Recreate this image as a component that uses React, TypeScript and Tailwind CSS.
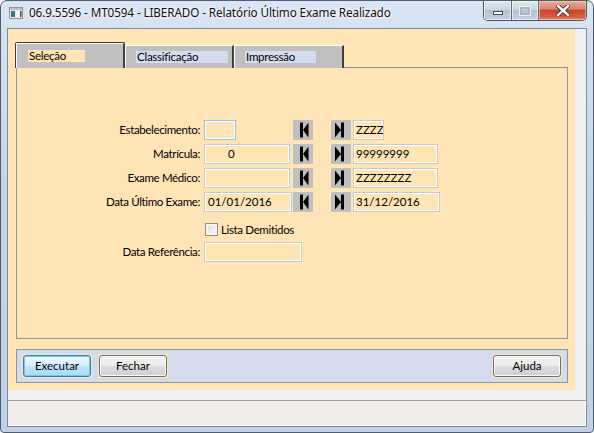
import type { ReactNode } from "react";

const PEACH = "bg-[#ffe4b5]";

function NavFirst() {
  return (
    <div className="w-[20px] h-[20px] bg-[#c0c0c0] shrink-0">
      <svg width="20" height="20" viewBox="0 0 20 20">
        <rect x="7" y="2.5" width="3" height="15" fill="#000" />
        <polygon points="10,10 15.5,2.5 15.5,17.5" fill="#000" />
      </svg>
    </div>
  );
}

function NavLast() {
  return (
    <div className="w-[20px] h-[20px] bg-[#c0c0c0] shrink-0">
      <svg width="20" height="20" viewBox="0 0 20 20">
        <polygon points="4,2.5 10,10 4,17.5" fill="#000" />
        <rect x="10" y="2.5" width="3" height="15" fill="#000" />
      </svg>
    </div>
  );
}

function Field({
  w,
  value,
  pad = "pl-[3px]",
  focus,
}: {
  w: string;
  value?: string;
  pad?: string;
  focus?: boolean;
}) {
  return (
    <div
      className={`${w} h-[20px] ${PEACH} border ${
        focus ? "border-[#9cc1e6]" : "border-[#c9c9c9]"
      } shadow-[inset_0_0_0_1px_#fff] ${pad} flex items-center overflow-hidden whitespace-nowrap text-black`}
    >
      {value}
    </div>
  );
}

function Row({
  label,
  left,
  right,
}: {
  label: string;
  left: ReactNode;
  right: ReactNode;
}) {
  return (
    <div className="flex items-center h-[20px]">
      <div className="w-[183px] text-right tracking-[-0.35px]">{label}</div>
      <div className="w-[89px] ml-[4px]">{left}</div>
      <NavFirst />
      <div className="w-[18px]" />
      <NavLast />
      <div className="ml-[2px]">{right}</div>
    </div>
  );
}

function WinButton({ children, primary }: { children: ReactNode; primary?: boolean }) {
  return (
    <div className={`${PEACH} p-[1px]`}>
      <div
        className={`w-[68px] h-[22px] rounded-[3px] border flex items-center justify-center ${
          primary
            ? "border-[#3c7fb1] bg-[linear-gradient(#eaf6fd_0%,#d9f0fc_50%,#bee6fd_50%,#a7d9f5_100%)] shadow-[inset_0_0_0_1px_#60d0f4]"
            : "border-[#707070] bg-[linear-gradient(#f2f2f2_0%,#ebebeb_50%,#dddddd_50%,#cfcfcf_100%)] shadow-[inset_0_0_0_1px_#fcfcfc]"
        }`}
      >
        {children}
      </div>
    </div>
  );
}

export default function App() {
  return (
    <div className="w-[594px] h-[433px] flex flex-col border border-[#4f5f70] rounded-t-[7px] rounded-b-[4px] overflow-hidden bg-[linear-gradient(180deg,#d9e5f2_0%,#c4d6e9_40%,#bed1e6_100%)] font-['Lato',sans-serif] text-[11.5px] text-black">
      {/* title bar */}
      <div className="h-[27px] flex shrink-0">
        <div className="flex items-center h-[24px] pl-[8px]">
          <svg width="14" height="12" viewBox="0 0 14 12">
            <rect x="0.5" y="0.5" width="13" height="11" fill="#e6eaea" stroke="#8a9696" />
            <rect x="1" y="1" width="12" height="2" fill="#b8c4c8" />
            <rect x="2" y="4" width="4" height="6" fill="#2e7f78" />
            <rect x="7" y="4" width="4" height="6" fill="#f4f6f6" />
            <rect x="11" y="4" width="1.5" height="6" fill="#3a4a50" />
          </svg>
          <span className="ml-[6px] font-['Noto_Sans',sans-serif] text-[11.7px] tracking-[-0.1px] text-[#111] [text-shadow:0_0_6px_#fff,0_0_3px_#fff]">
            06.9.5596 - MT0594 - LIBERADO - Relatório Último Exame Realizado
          </span>
        </div>
        <div className="flex-1" />
        <div className="flex h-[20px] mr-[6px] rounded-b-[5px] border border-t-0 border-[#4b5b6c] overflow-hidden">
          <div className="w-[28px] h-full border-r border-[#5c6c7c] bg-[linear-gradient(#dfe5ec_0%,#cdd6e0_45%,#b4c1cf_50%,#c5d1de_100%)] shadow-[inset_0_0_0_1px_rgba(255,255,255,0.6)] flex items-center justify-center">
            <div className="w-[10px] h-[4px] mt-[5px] bg-white border border-[#3d4b5c]" />
          </div>
          <div className="w-[27px] h-full border-r border-[#5c6c7c] bg-[linear-gradient(#dfe5ec_0%,#cdd6e0_45%,#b4c1cf_50%,#c5d1de_100%)] shadow-[inset_0_0_0_1px_rgba(255,255,255,0.6)] flex items-center justify-center">
            <div className="w-[10px] h-[8px] border-[2px] border-[#a8b6c6] bg-transparent shadow-[0_0_0_1px_#e8eef5]" />
          </div>
          <div className="w-[47px] h-full bg-[linear-gradient(#e9a897_0%,#d88a74_40%,#c7462b_50%,#d35a3e_80%,#e08a6c_100%)] shadow-[inset_0_0_0_1px_rgba(255,220,210,0.5)] flex items-center justify-center">
            <svg width="14" height="11" viewBox="0 0 14 11">
              <path
                d="M2 1 L12 10 M12 1 L2 10"
                stroke="#3b2a28"
                strokeWidth="4.2"
                strokeLinecap="square"
              />
              <path
                d="M2 1 L12 10 M12 1 L2 10"
                stroke="#fff"
                strokeWidth="2.4"
                strokeLinecap="square"
              />
            </svg>
          </div>
        </div>
      </div>

      {/* client */}
      <div className="mx-[6px] h-[399px] shrink-0 border border-[#7d8c9c] bg-[#f0f0f0] flex flex-col">
        <div className="flex h-[361px] shrink-0">
          <div className={`w-[567px] ${PEACH} pl-[8px] pt-[13px] flex flex-col`}>
            {/* tabs */}
            <div className="flex items-end h-[26px] -mb-[1px] relative z-10 tracking-[-0.25px]">
              <div className="w-[110px] h-[26px] bg-[#c0c0c0] border border-b-0 border-[#3c3c3c] rounded-t-[2px] -ml-[1px]">
                <div className="h-full border-t border-l border-white flex items-center pl-[11px] border-r border-r-[#404040]">
                  <span className="bg-[#ffe4b5] w-[57px] h-[12px] leading-[12px] pl-[1px]">Seleção</span>
                </div>
              </div>
              <div className="w-[109px] h-[23px] bg-[#c0c0c0] border-t border-l border-white border-r-2 border-r-[#404040] flex items-center pl-[10px]">
                <span className="bg-[#d4dcf0] w-[92px] h-[12px] leading-[12px] pl-[1px]">Classificação</span>
              </div>
              <div className="w-[110px] h-[23px] bg-[#c0c0c0] border-t border-l border-white border-r-2 border-r-[#404040] flex items-center pl-[10px]">
                <span className="bg-[#d4dcf0] w-[71px] h-[12px] leading-[12px] pl-[1px]">Impressão</span>
              </div>
            </div>

            {/* tab panel */}
            <div className="w-[552px] h-[272px] border border-[#8e969e] pt-[52px] flex flex-col">
              <div className="flex flex-col gap-[4px]">
                <Row
                  label="Estabelecimento:"
                  left={<Field w="w-[32px]" focus />}
                  right={<Field w="w-[31px]" value="ZZZZZ" pad="pl-[2px]" />}
                />
                <Row
                  label="Matrícula:"
                  left={<Field w="w-[86px]" value="0" pad="pl-[23px]" />}
                  right={<Field w="w-[85px]" value="99999999" pad="pl-[2px]" />}
                />
                <Row
                  label="Exame Médico:"
                  left={<Field w="w-[86px]" />}
                  right={<Field w="w-[85px]" value="ZZZZZZZZ" pad="pl-[2px]" />}
                />
                <Row
                  label="Data Último Exame:"
                  left={<Field w="w-[88px]" value="01/01/2016" />}
                  right={<Field w="w-[87px]" value="31/12/2016" pad="pl-[2px]" />}
                />
              </div>

              <div className="flex items-center h-[13px] mt-[11px] pl-[188px]">
                <div className="w-[13px] h-[13px] border border-[#8e8f8f] bg-[linear-gradient(135deg,#dcdcdc,#fbfbfb)] shadow-[inset_0_0_0_2px_#f4f4f4]" />
                <span className="ml-[3px] tracking-[-0.35px]">Lista Demitidos</span>
              </div>

              <div className="flex items-center h-[20px] mt-[6px]">
                <div className="w-[183px] text-right tracking-[-0.35px]">Data Referência:</div>
                <div className="ml-[4px]">
                  <Field w="w-[98px]" />
                </div>
              </div>
            </div>

            {/* buttons panel */}
            <div className="w-[552px] h-[34px] mt-[10px] border border-[#8e969e] bg-[#d3dbed] flex items-center px-[5px]">
              <WinButton primary>Executar</WinButton>
              <div className="ml-[6px]">
                <WinButton>Fechar</WinButton>
              </div>
              <div className="flex-1" />
              <WinButton>Ajuda</WinButton>
            </div>
          </div>
          <div className="flex-1 bg-[#f0f0f0]" />
        </div>
        <div className="h-[10px] shrink-0 bg-[#f0f0f0]" />
        <div className="flex-1 border-t border-[#a0a0a0] bg-[#f0edeb] shadow-[inset_0_-1px_0_#fff,inset_-1px_0_0_#fff]" />
      </div>
    </div>
  );
}
